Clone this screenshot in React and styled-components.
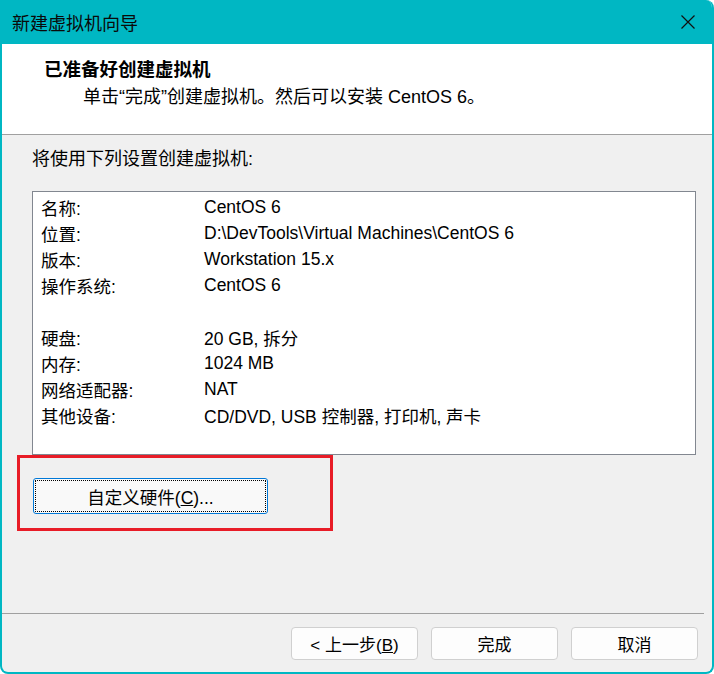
import React from 'react';
import styled, { createGlobalStyle } from 'styled-components';

const Global = createGlobalStyle`
  html, body { margin: 0; padding: 0; background: #ffffff; }
  body { width: 714px; height: 674px; overflow: hidden; }
  #root { width: 714px; height: 674px; }
`;

const CYAN = '#00b7c3';

const Window = styled.div`
  box-sizing: border-box;
  width: 714px;
  height: 674px;
  display: flex;
  flex-direction: column;
  background: #f0f0f0;
  border: 2px solid ${CYAN};
  border-top: 0;
  border-radius: 0 8px 8px 8px;
  overflow: hidden;
  font-family: "Liberation Sans", "Noto Sans CJK SC", sans-serif;
  color: #000;
`;

const TitleBar = styled.div`
  height: 44px;
  flex: 0 0 44px;
  display: flex;
  align-items: center;
  background: ${CYAN};
  margin: 0 -2px;
  padding-left: 12px;
`;

const Title = styled.div`
  flex: 1;
  font-family: "Noto Sans CJK SC", sans-serif;
  font-size: 18px;
  line-height: 24px;
  color: #0a0a0a;
`;

const CloseBox = styled.div`
  width: 52px;
  height: 44px;
  display: flex;
  align-items: center;
  justify-content: center;
`;

const Header = styled.div`
  box-sizing: border-box;
  height: 91px;
  flex: 0 0 91px;
  background: #ffffff;
  border-bottom: 1px solid #a0a0a0;
  padding: 12px 0 0 42px;
  display: flex;
  flex-direction: column;
`;

const HeaderTitle = styled.div`
  font-family: "Noto Sans CJK SC", sans-serif;
  font-weight: 700;
  font-size: 18.5px;
  line-height: 24px;
`;

const HeaderSub = styled.div`
  font-size: 18px;
  line-height: 24px;
  margin-top: 5px;
  padding-left: 39px;
`;

const Body = styled.div`
  flex: 1;
  display: flex;
  flex-direction: column;
  align-items: flex-start;
  padding: 14px 15px 0 15px;
`;

const Intro = styled.div`
  font-size: 18px;
  line-height: 20px;
  margin-left: 15px;
`;

const ListBox = styled.div`
  box-sizing: border-box;
  margin: 22px 0 0 15px;
  width: 664px;
  height: 264px;
  background: #ffffff;
  border: 1px solid #828790;
  padding: 2px 0 0 8px;
  display: grid;
  grid-template-columns: 163px 1fr;
  grid-auto-rows: 26px;
  align-content: start;
  align-items: center;
  font-size: 17.5px;
`;

const Cell = styled.div`
  white-space: nowrap;
`;

const Highlight = styled.div`
  box-sizing: border-box;
  width: 316px;
  height: 76px;
  border: 3px solid #e81c27;
  padding: 20px 0 0 13px;
`;

const CustomButton = styled.button`
  box-sizing: border-box;
  width: 235px;
  height: 36px;
  background: #f9f9f9;
  border: 1px solid #0078d7;
  border-radius: 3px;
  outline: 1px dotted #000;
  outline-offset: -3px;
  font-family: "Liberation Sans", "Noto Sans CJK SC", sans-serif;
  font-size: 17.5px;
  color: #000;
  padding: 0;
`;

const Footer = styled.div`
  flex: 0 0 auto;
  display: flex;
  flex-direction: column;
`;

const Separator = styled.div`
  height: 1px;
  background: #a0a0a0;
  margin-right: 8px;
`;

const ButtonRow = styled.div`
  display: flex;
  justify-content: flex-end;
  gap: 13px;
  padding: 13px 14px 12px 0;
`;

const DialogButton = styled.button`
  box-sizing: border-box;
  width: 127px;
  height: 33px;
  background: #fdfdfd;
  border: 1px solid #d0d0d0;
  border-radius: 4px;
  font-family: "Liberation Sans", "Noto Sans CJK SC", sans-serif;
  font-size: 17px;
  color: #000;
  padding: 0;
`;

const rows = [
  ['名称:', 'CentOS 6'],
  ['位置:', 'D:\\DevTools\\Virtual Machines\\CentOS 6'],
  ['版本:', 'Workstation 15.x'],
  ['操作系统:', 'CentOS 6'],
  ['', ''],
  ['硬盘:', '20 GB, 拆分'],
  ['内存:', '1024 MB'],
  ['网络适配器:', 'NAT'],
  ['其他设备:', 'CD/DVD, USB 控制器, 打印机, 声卡'],
];

export default function App() {
  return (
    <>
      <Global />
      <Window>
        <TitleBar>
          <Title>新建虚拟机向导</Title>
          <CloseBox>
            <svg width="16" height="16" viewBox="0 0 16 16">
              <path d="M1.5 1.5 L14.5 14.5 M14.5 1.5 L1.5 14.5" stroke="#111" strokeWidth="1.2" fill="none" />
            </svg>
          </CloseBox>
        </TitleBar>
        <Header>
          <HeaderTitle>已准备好创建虚拟机</HeaderTitle>
          <HeaderSub>单击“完成”创建虚拟机。然后可以安装 CentOS 6。</HeaderSub>
        </Header>
        <Body>
          <Intro>将使用下列设置创建虚拟机:</Intro>
          <ListBox>
            {rows.map(([k, v], i) => (
              <React.Fragment key={i}>
                <Cell>{k}</Cell>
                <Cell>{v}</Cell>
              </React.Fragment>
            ))}
          </ListBox>
          <Highlight>
            <CustomButton>自定义硬件(<u>C</u>)...</CustomButton>
          </Highlight>
        </Body>
        <Footer>
          <Separator />
          <ButtonRow>
            <DialogButton>&lt; 上一步(<u>B</u>)</DialogButton>
            <DialogButton>完成</DialogButton>
            <DialogButton>取消</DialogButton>
          </ButtonRow>
        </Footer>
      </Window>
    </>
  );
}
